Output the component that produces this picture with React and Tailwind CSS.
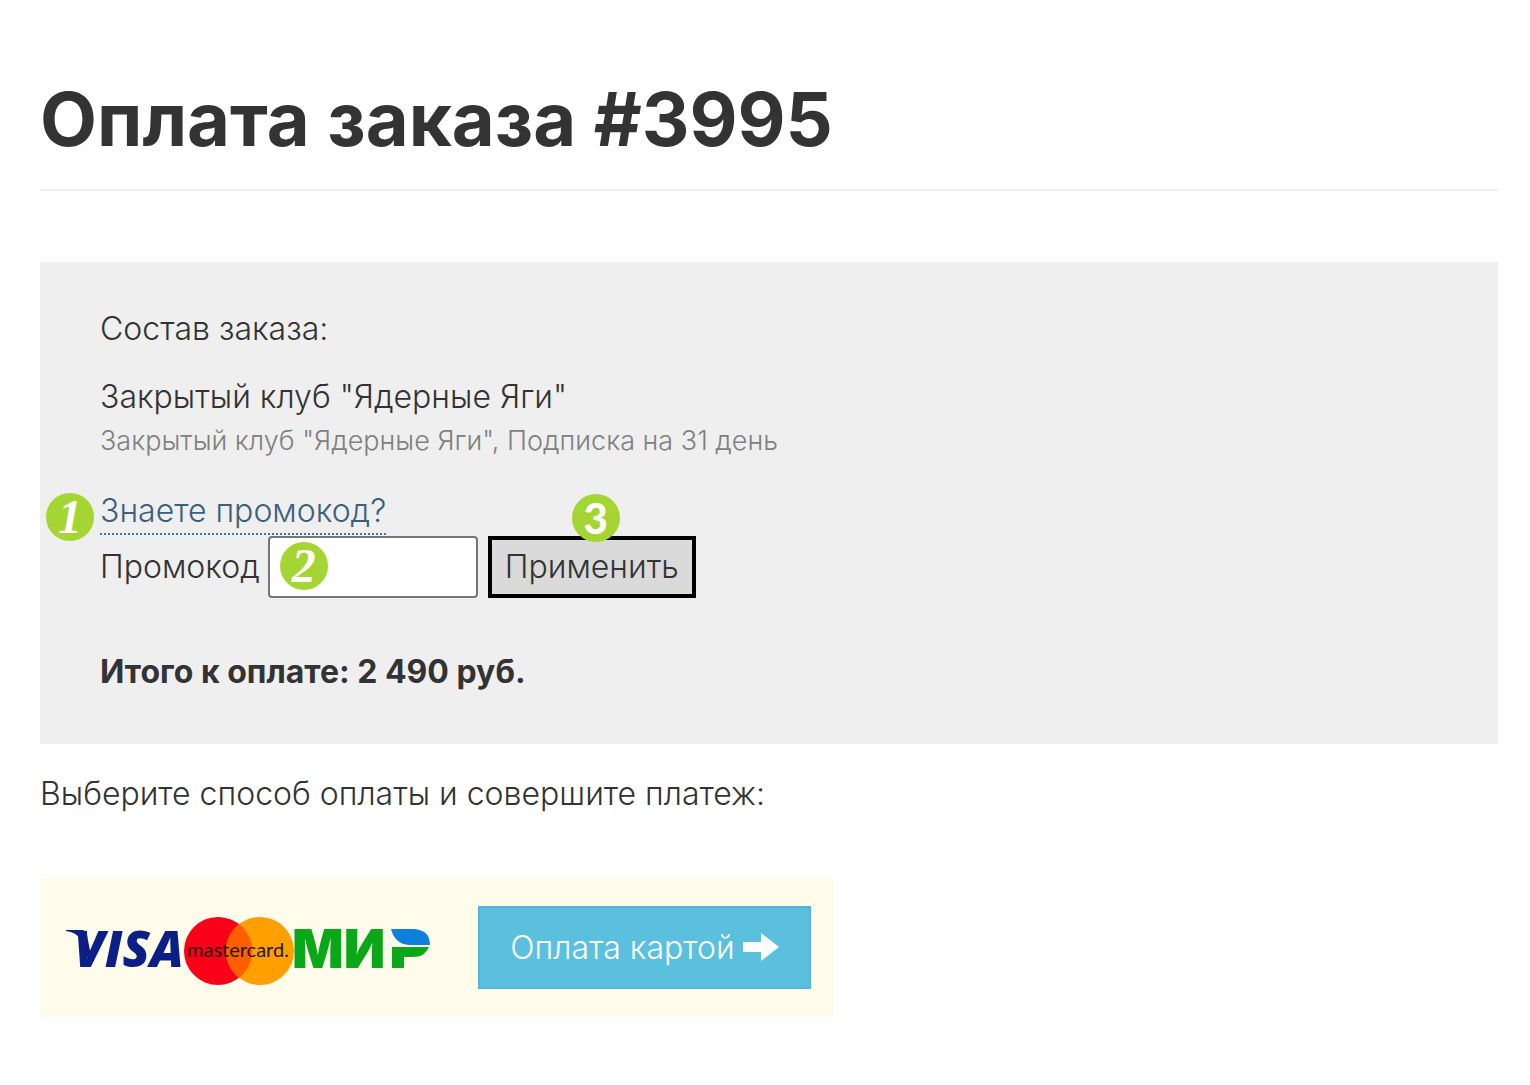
import { useState } from 'react';

function Marker({ label, className }) {
  return (
    <span className={`absolute flex items-center justify-center rounded-full bg-[#a4d532] text-white leading-none pointer-events-none ${className}`}>
      {label}
    </span>
  );
}

function CardLogos() {
  return (
    <svg className="w-[366px] h-[76px] shrink-0" viewBox="0 0 366 76" role="img" aria-label="Visa, Mastercard, МИР">
      {/* Visa */}
      <path d="M0 20 H16 Q20 20 21 25 L25 46 L19 48 L14 29 Q10 22 0 21Z" fill="#0b1f7c" />
      <text x="8" y="57" fontFamily="Open Sans, sans-serif" fontWeight="800" fontStyle="italic" fontSize="50" fill="#0b1f86">VISA</text>

      {/* Mastercard */}
      <circle cx="152" cy="41" r="34" fill="#fb0019" />
      <circle cx="194" cy="41" r="34" fill="#ff9f00" />
      <path d="M173 14 A34 34 0 0 1 173 68 A34 34 0 0 1 173 14Z" fill="#ff5f00" />
      <text x="121" y="47" fontFamily="Lato, sans-serif" fontWeight="400" fontSize="20" fill="#2a1408">mastercard.</text>

      {/* МИР */}
      <text x="226" y="58" fontFamily="Inter, sans-serif" fontWeight="900" fontSize="54" fill="#0aa818">МИ</text>
      <path d="M326 37 H363 Q359 47 347 47 H338 V58 H326Z" fill="#0aa818" />
      <path d="M325 19 H348 Q364 20 364 35 H343 Q329 34 325 19Z" fill="#0f7fdc" />
    </svg>
  );
}

export default function App() {
  const [promo, setPromo] = useState('');
  const [promoOpen, setPromoOpen] = useState(true);

  return (
    <main className="pl-10 pr-8 pt-[74px] pb-16 bg-white font-['Inter','Noto_Sans',sans-serif] font-light text-[32px] leading-[44px] text-[#333]">
      <h1 className="text-[74px] leading-[90px] font-bold pb-[25px] border-b-2 border-[#eee]">Оплата заказа #3995</h1>

      <section className="mt-[71px] bg-[#efefef] pl-15 pr-15 pt-[45px] pb-[50px]">
        <p>Состав заказа:</p>
        <p className="mt-6">Закрытый клуб "Ядерные Яги"</p>
        <p className="text-[27px] text-[#808080]">Закрытый клуб "Ядерные Яги", Подписка на 31 день</p>

        <div className="mt-[26px] flex">
          <div className="relative">
            <a
              href="#promo"
              className="block border-b-2 border-dotted border-[#337ab7] text-[#3c5f80]"
              onClick={(e) => { e.preventDefault(); setPromoOpen(!promoOpen); }}
            >
              Знаете промокод?
            </a>
            <Marker label="1" className="-left-[54px] top-1 size-12 text-[48px] font-bold italic font-['Liberation_Serif',serif]" />
          </div>
        </div>

        {promoOpen && (
          <form id="promo" className="mt-px flex items-center" onSubmit={(e) => e.preventDefault()}>
            <label htmlFor="promo-code" className="mr-2">Промокод</label>
            <div className="relative mr-[10px]">
              <input
                id="promo-code"
                type="text"
                value={promo}
                onChange={(e) => setPromo(e.target.value)}
                className="block w-[210px] h-[62px] px-3 bg-white border-2 border-[#767676] rounded-[4px]"
              />
              <Marker label="2" className="left-3 top-[6px] size-12 text-[48px] font-bold italic font-['Liberation_Serif',serif]" />
            </div>
            <div className="relative">
              <button type="submit" className="block w-[208px] h-[62px] bg-[#dadada] border-4 border-black text-center">Применить</button>
              <Marker label="3" className="left-[84px] -top-[42px] size-12 text-[42px] font-black font-['Lato',sans-serif]" />
            </div>
          </form>
        )}

        <p className="mt-[52px] font-bold">Итого к оплате: 2 490 руб.</p>
      </section>

      <p className="mt-7">Выберите способ оплаты и совершите платеж:</p>

      <div className="mt-[62px] w-fit flex items-center gap-[46px] bg-[#fffceb] pl-[26px] pr-[23px] py-7">
        <CardLogos />
        <button type="button" className="w-[333px] h-[83px] flex items-center justify-center gap-2 bg-[#5bc0de] border-2 border-[#56b7d4] text-white">
          Оплата картой
          <svg className="w-9 h-[29px]" viewBox="0 0 36 29" fill="currentColor" aria-hidden="true">
            <path d="M0 9 H18 V0 L36 14 L18 28 V19 H0Z" />
          </svg>
        </button>
      </div>
    </main>
  );
}
